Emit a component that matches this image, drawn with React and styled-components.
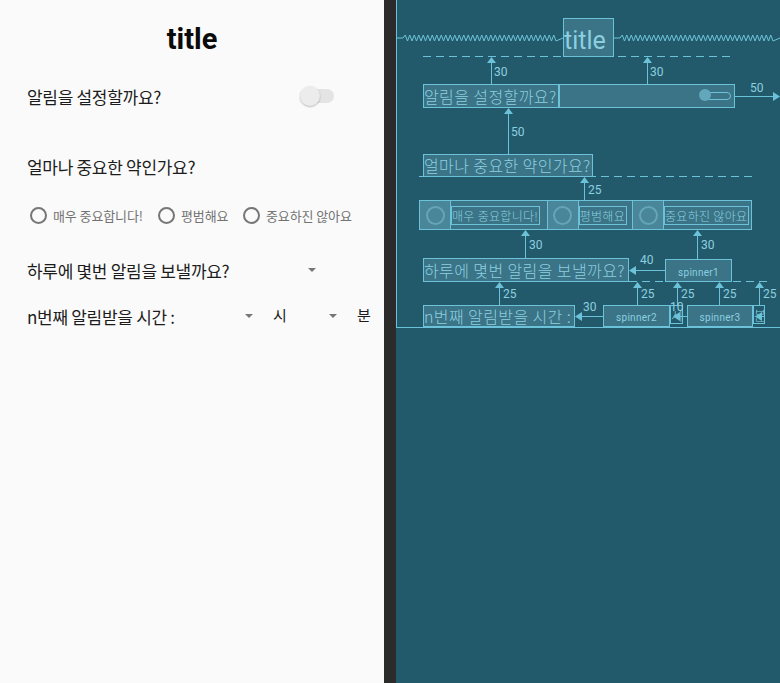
import React from 'react';
import styled, { createGlobalStyle } from 'styled-components';

const LINE = '#6cc2d8';
const TEXT = '#8ccfe0';

const GlobalStyle = createGlobalStyle`
  html, body { margin: 0; height: 100%; }
  body { font-family: Roboto, "Noto Sans CJK KR", sans-serif; }
`;

const Page = styled.div`
  display: flex;
  width: 780px;
  height: 100vh;
  overflow: hidden;
`;

const Design = styled.section`
  width: 384px;
  flex: none;
  box-sizing: border-box;
  padding-left: 27px;
  background: #fafafa;
  display: flex;
  flex-direction: column;
`;

const Divider = styled.div`
  width: 12px;
  flex: none;
  background: #2b2b2b;
`;

const Blueprint = styled.section`
  position: relative;
  flex: 1;
  background: #235a6b;
  overflow: hidden;
`;

const Title = styled.h1`
  margin: 18px 0 0 -27px;
  height: 39px;
  line-height: 42px;
  text-align: center;
  font-size: 29px;
  font-weight: 700;
  color: #0a0a0a;
`;

const Row = styled.div`
  display: flex;
  align-items: center;
  height: ${p => p.$h}px;
  margin-top: ${p => p.$top}px;
  padding-right: ${p => p.$pr || 0}px;
`;

const Label = styled.span`
  font-family: "Noto Sans CJK KR", Roboto, sans-serif;
  font-size: 17px;
  letter-spacing: -0.3px;
  color: #1c1c1c;
  white-space: nowrap;
`;

const Switch = styled.span`
  margin-left: auto;
  position: relative;
  width: 34px;
  height: 14px;
  border-radius: 7px;
  background: #e4e4e4;
  &::before {
    content: '';
    position: absolute;
    left: 0;
    top: -3px;
    width: 20px;
    height: 20px;
    border-radius: 50%;
    background: #ececec;
    box-shadow: 0 1px 2px rgba(0, 0, 0, 0.25);
  }
`;

const RadioRow = styled.div`
  display: flex;
  margin: 22px 0 0 -4px;
  height: 30px;
`;

const Radio = styled.label`
  display: flex;
  align-items: center;
  width: ${p => p.$w}px;
`;

const RadioMark = styled.span`
  width: 30px;
  display: flex;
  justify-content: center;
  &::before {
    content: '';
    width: 17px;
    height: 17px;
    box-sizing: border-box;
    border: 2px solid #767676;
    border-radius: 50%;
  }
`;

const RadioText = styled.span`
  font-family: "Noto Sans CJK KR", Roboto, sans-serif;
  font-size: 13px;
  letter-spacing: -0.1px;
  color: #737373;
  white-space: nowrap;
`;

const Spinner = styled.span`
  margin-left: ${p => (p.$auto ? 'auto' : '0')};
  width: 67px;
  height: 22px;
  box-sizing: border-box;
  padding-right: 20px;
  display: flex;
  align-items: center;
  justify-content: flex-end;
  &::after {
    content: '';
    border-left: 4.5px solid transparent;
    border-right: 4.5px solid transparent;
    border-top: 4.5px solid #767676;
  }
`;

const Unit = styled.span`
  width: ${p => p.$w}px;
  margin-right: ${p => p.$mr || 0}px;
  font-family: "Noto Sans CJK KR", Roboto, sans-serif;
  font-size: 15px;
  color: #1c1c1c;
  margin-top: -4px;
`;

/* blueprint nodes: positions on the editor canvas */
const Node = styled.div`
  position: absolute;
  left: ${p => p.$x}px;
  top: ${p => p.$y}px;
  width: ${p => p.$w}px;
  height: ${p => p.$h}px;
  box-sizing: border-box;
  border: 1px solid ${LINE};
  background: ${p => (p.$clear ? 'transparent' : '#3a7486')};
  color: ${TEXT};
  font-family: "Noto Sans CJK KR", Roboto, sans-serif;
  font-size: ${p => p.$fs || 16}px;
  font-weight: 300;
  line-height: ${p => p.$h - 2}px;
  letter-spacing: 0.4px;
  white-space: nowrap;
  overflow: hidden;
  display: flex;
`;

const BlueTitle = styled.span`
  font-family: Roboto, sans-serif;
  font-size: 25px;
  font-weight: 400;
  letter-spacing: 0;
  padding-top: 3px;
`;

const SpinnerName = styled.span`
  margin: auto auto 0;
  font-family: Roboto, sans-serif;
  font-size: 10px;
  font-weight: 400;
  line-height: 16px;
  letter-spacing: 0.3px;
`;

const MiniSwitch = styled.span`
  margin: auto 3px auto auto;
  position: relative;
  width: 30px;
  height: 8px;
  box-sizing: border-box;
  border: 1px solid ${LINE};
  border-radius: 4px;
  &::before {
    content: '';
    position: absolute;
    left: -3px;
    top: -4px;
    width: 12px;
    height: 12px;
    border-radius: 50%;
    background: #62a7bb;
  }
`;

const BlueRadio = styled.div`
  display: flex;
  width: ${p => p.$w}px;
  height: 100%;
  border-right: ${p => (p.$last ? 'none' : `1px solid ${LINE}`)};
`;

const BlueMark = styled.span`
  width: 30px;
  flex: none;
  background: #4a8699;
  border-right: 1px solid ${LINE};
  display: flex;
  align-items: center;
  justify-content: center;
  &::before {
    content: '';
    width: 19px;
    height: 19px;
    box-sizing: border-box;
    border: 2px solid #64a6b9;
    border-radius: 50%;
  }
`;

const BlueRadioText = styled.span`
  margin: 5px 5px 4px 0;
  border: 1px solid ${LINE};
  font-size: 12px;
  line-height: 17px;
  letter-spacing: 0.3px;
  padding-right: 1px;
`;

function zigzag(x1, x2, y) {
  let d = `M${x1} ${y} L${x1 + 6} ${y}`;
  let up = true;
  for (let x = x1 + 8.25; x < x2 - 6; x += 2.25) {
    d += ` L${x.toFixed(2)} ${up ? y - 3 : y + 3}`;
    up = !up;
  }
  return d + ` L${x2} ${y}`;
}

function Up({ x, from, to }) {
  return (
    <g>
      <line x1={x + 0.5} y1={from} x2={x + 0.5} y2={to + 4} stroke={LINE} />
      <polygon points={`${x + 0.5},${to} ${x - 4},${to + 6} ${x + 5},${to + 6}`} fill={LINE} />
    </g>
  );
}

function Side({ y, from, to }) {
  const dir = to > from ? -1 : 1;
  return (
    <g>
      <line x1={from} y1={y + 0.5} x2={to + dir * 4} y2={y + 0.5} stroke={LINE} />
      <polygon
        points={`${to},${y + 0.5} ${to + dir * 7},${y - 4} ${to + dir * 7},${y + 5}`}
        fill={LINE}
      />
    </g>
  );
}

const labels = [
  ['30', 98, 76], ['30', 254, 76], ['50', 354, 92], ['50', 115, 136], ['25', 192, 194],
  ['30', 133, 249], ['30', 305, 249], ['40', 244, 264], ['25', 107, 298], ['25', 245, 298],
  ['25', 285, 298], ['25', 327, 298], ['25', 367, 298], ['30', 187, 311], ['10', 274, 311],
];

function Constraints() {
  return (
    <svg width="384" height="683" style={{ position: 'absolute', left: 0, top: 0 }}>
      <line x1="0.5" y1="0" x2="0.5" y2="328" stroke={LINE} />
      <line x1="0" y1="327.5" x2="384" y2="327.5" stroke={LINE} />
      <path d={zigzag(1, 167, 38)} fill="none" stroke={LINE} />
      <path d={zigzag(218, 384, 38)} fill="none" stroke={LINE} />
      <g stroke={LINE} strokeDasharray="8 5">
        <line x1="27" y1="56.5" x2="339" y2="56.5" />
        <line x1="163" y1="107.5" x2="212" y2="107.5" />
        <line x1="23" y1="176.5" x2="356" y2="176.5" />
        <line x1="233" y1="281.5" x2="372" y2="281.5" />
      </g>
      <Up x={95} from={84} to={57} />
      <Up x={251} from={84} to={57} />
      <Up x={112} from={154} to={108} />
      <Up x={188} from={200} to={177} />
      <Up x={129} from={258} to={230} />
      <Up x={301} from={259} to={230} />
      <Up x={103} from={305} to={282} />
      <Up x={241} from={305} to={282} />
      <Up x={281} from={305} to={282} />
      <Up x={323} from={305} to={282} />
      <Up x={363} from={305} to={282} />
      <Side y={96} from={339} to={384} />
      <Side y={270} from={269} to={233} />
      <Side y={316} from={207} to={179} />
      <Side y={316} from={291} to={277} />
      <Side y={316} from={369} to={359} />
      <g fill={TEXT} fontFamily="Roboto, sans-serif" fontSize="12">
        {labels.map(([t, x, y], i) => (
          <text key={i} x={x} y={y}>{t}</text>
        ))}
      </g>
    </svg>
  );
}

export default function App() {
  return (
    <Page>
      <GlobalStyle />
      <Design>
        <Title>title</Title>
        <Row $h={24} $top={27} $pr={50}>
          <Label>알림을 설정할까요?</Label>
          <Switch />
        </Row>
        <Row $h={24} $top={46}>
          <Label>얼마나 중요한 약인가요?</Label>
        </Row>
        <RadioRow>
          <Radio $w={128}><RadioMark /><RadioText>매우 중요합니다!</RadioText></Radio>
          <Radio $w={85}><RadioMark /><RadioText>평범해요</RadioText></Radio>
          <Radio $w={120}><RadioMark /><RadioText>중요하진 않아요</RadioText></Radio>
        </RadioRow>
        <Row $h={24} $top={28} $pr={48}>
          <Label>하루에 몇번 알림을 보낼까요?</Label>
          <Spinner $auto />
        </Row>
        <Row $h={22} $top={23} $pr={15}>
          <Label>n번째 알림받을 시간 :</Label>
          <Spinner $auto />
          <Unit $w={13} $mr={4}>시</Unit>
          <Spinner />
          <Unit $w={12}>분</Unit>
        </Row>
      </Design>
      <Divider />
      <Blueprint>
        <Node $x={167} $y={18} $w={51} $h={39}><BlueTitle>title</BlueTitle></Node>
        <Node $x={27} $y={84} $w={136} $h={24}>알림을 설정할까요?</Node>
        <Node $x={163} $y={84} $w={176} $h={24}><MiniSwitch /></Node>
        <Node $x={27} $y={154} $w={170} $h={23}>얼마나 중요한 약인가요?</Node>
        <Node $x={23} $y={200} $w={333} $h={30}>
          <BlueRadio $w={128}><BlueMark /><BlueRadioText>매우 중요합니다!</BlueRadioText></BlueRadio>
          <BlueRadio $w={85}><BlueMark /><BlueRadioText>평범해요</BlueRadioText></BlueRadio>
          <BlueRadio $w={118} $last><BlueMark /><BlueRadioText>중요하진 않아요</BlueRadioText></BlueRadio>
        </Node>
        <Node $x={27} $y={258} $w={206} $h={24}>하루에 몇번 알림을 보낼까요?</Node>
        <Node $x={269} $y={259} $w={67} $h={23}><SpinnerName>spinner1</SpinnerName></Node>
        <Node $x={27} $y={305} $w={152} $h={22}>n번째 알림받을 시간 :</Node>
        <Node $x={207} $y={305} $w={67} $h={22}><SpinnerName>spinner2</SpinnerName></Node>
        <Node $x={274} $y={305} $w={13} $h={19} $fs={13} $clear>시</Node>
        <Node $x={291} $y={305} $w={66} $h={22}><SpinnerName>spinner3</SpinnerName></Node>
        <Node $x={357} $y={305} $w={12} $h={19} $fs={13} $clear>분</Node>
        <Constraints />
      </Blueprint>
    </Page>
  );
}
